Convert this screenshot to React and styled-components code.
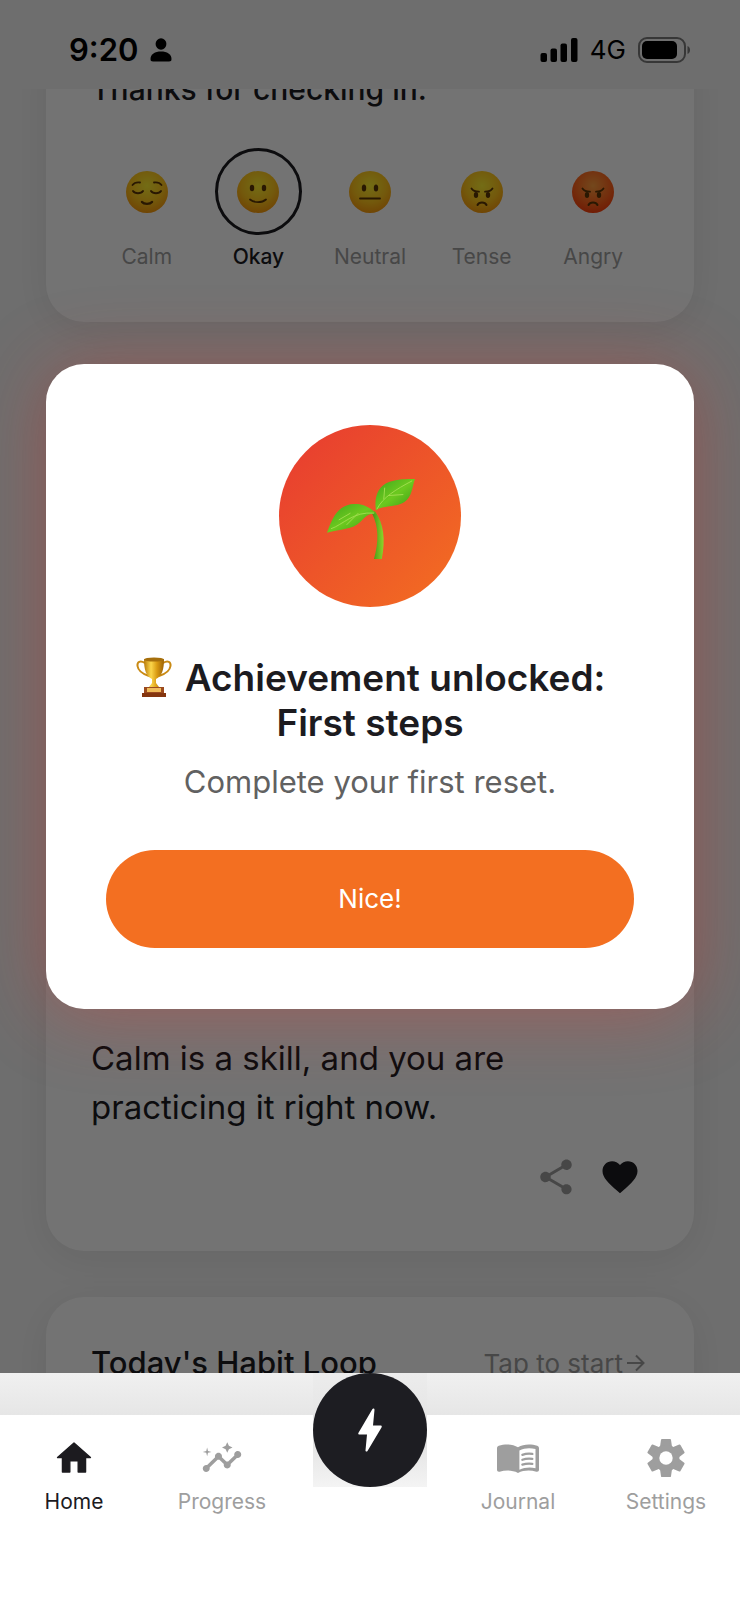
import React, { useState } from 'react';
import styled, { createGlobalStyle, ThemeProvider } from 'styled-components';
import { MdFavorite, MdInsights, MdShare } from 'react-icons/md';

const theme = {
  color: {
    ink: '#1c1b1f',
    muted: '#9e9e9e',
    body: '#616161',
    page: '#f4f4f4',
    surface: '#ffffff',
    dark: '#1d1d22',
    accent: '#f36f21',
    accentDeep: '#e73a31',
  },
  font: {
    small: '21px',
    medium: '26px',
    heading: '30px',
    body: '31px',
    quote: '33px',
    title: '37px',
  },
};

const GlobalStyle = createGlobalStyle`
  *, *::before, *::after {
    box-sizing: border-box;
  }
  body, h1, h2, p {
    margin: 0;
    padding: 0;
  }
  body {
    background-color: ${theme.color.surface};
    color: ${theme.color.ink};
    font-family: Inter, 'Liberation Sans', sans-serif;
  }
  button {
    border: 0;
    background: none;
    font-family: inherit;
    cursor: pointer;
  }
`;

const Screen = styled.div`
  display: flex;
  flex-direction: column;
  height: 100vh;
`;
const Stage = styled.div`
  position: relative;
  display: flex;
  flex: 1;
  flex-direction: column;
  min-height: 0;
  background-color: ${({ theme }) => theme.color.page};
`;
const StatusBar = styled.header`
  display: flex;
  align-items: center;
  justify-content: space-between;
  flex-shrink: 0;
  height: 89px;
  padding: 10px 50px 0 69px;
  color: #000000;
`;
const StatusGroup = styled.div`
  display: flex;
  align-items: center;
  gap: 12px;
`;
const StatusTime = styled.span`
  font-size: ${({ theme }) => theme.font.body};
  font-weight: 600;
`;
const StatusNetwork = styled.span`
  font-size: ${({ theme }) => theme.font.medium};
`;
const Feed = styled.main`
  flex: 1;
  min-height: 0;
  padding: 0 46px;
  overflow: hidden;
`;
const FeedScroll = styled.div`
  display: flex;
  flex-direction: column;
  gap: 46px;
  margin-top: -66px;
`;
const Card = styled.section`
  padding: 45px;
  border-radius: 38px;
  background-color: ${({ theme }) => theme.color.surface};
  box-shadow: 0 8px 40px rgba(0, 0, 0, .07);
`;
const MoodCard = styled(Card)`
  padding-bottom: 51px;
`;
const CardTitle = styled.h2`
  font-size: ${({ theme, $large }) => $large ? theme.font.body : theme.font.heading};
  font-weight: 500;
  line-height: 42px;
`;
const MoodList = styled.div`
  display: grid;
  grid-template-columns: repeat(5, 1fr);
  margin-top: 38px;
`;
const MoodButton = styled.button`
  display: flex;
  flex-direction: column;
  align-items: center;
  gap: 8px;
  padding: 0;
  color: ${({ theme, $selected }) => $selected ? theme.color.ink : theme.color.muted};
  font-size: ${({ theme }) => theme.font.small};
  font-weight: ${({ $selected }) => $selected ? 500 : 400};
  line-height: 28px;
`;
const MoodRing = styled.span`
  display: flex;
  align-items: center;
  justify-content: center;
  width: 87px;
  height: 87px;
  border: 3px solid ${({ theme, $selected }) => $selected ? theme.color.ink : 'transparent'};
  border-radius: 50%;
`;
const QuoteCard = styled(Card)`
  display: flex;
  flex-direction: column;
  justify-content: flex-end;
  min-height: 883px;
`;
const Quote = styled.p`
  max-width: 460px;
  font-size: ${({ theme }) => theme.font.quote};
  line-height: 49px;
`;
const QuoteActions = styled.div`
  display: flex;
  justify-content: flex-end;
  gap: 6px;
  margin-top: 16px;
`;
const IconButton = styled.button`
  display: flex;
  padding: 8px;
  color: ${({ theme, $active }) => $active ? theme.color.ink : theme.color.muted};
  font-size: 42px;
`;
const HabitHeader = styled.div`
  display: flex;
  align-items: center;
  justify-content: space-between;
`;
const HabitLink = styled.a`
  display: flex;
  align-items: center;
  gap: 4px;
  padding-right: 4px;
  color: ${({ theme }) => theme.color.muted};
  font-size: ${({ theme }) => theme.font.medium};
  text-decoration: none;
`;
const Overlay = styled.div`
  position: absolute;
  inset: 0;
  display: flex;
  align-items: center;
  justify-content: center;
  padding: 0 46px;
  background-color: rgba(0, 0, 0, .55);
  overflow: hidden;
`;
const Dialog = styled.div`
  display: flex;
  flex-direction: column;
  align-items: center;
  width: 100%;
  padding: 61px 60px;
  border-radius: 38px;
  background-color: ${({ theme }) => theme.color.surface};
  box-shadow: 0 4px 76px rgba(231, 58, 49, .36);
  text-align: center;
`;
const Badge = styled.div`
  display: flex;
  align-items: center;
  justify-content: center;
  width: 182px;
  height: 182px;
  padding: 6px 0 0 4px;
  border-radius: 50%;
  background-image: linear-gradient(135deg, ${({ theme }) => theme.color.accentDeep}, ${({ theme }) => theme.color.accent});
`;
const DialogTitle = styled.h1`
  margin-top: 48px;
  font-size: ${({ theme }) => theme.font.title};
  font-weight: 600;
  line-height: 45px;

  svg {
    margin-right: 12px;
    vertical-align: -6px;
  }
`;
const DialogText = styled.p`
  margin-top: 18px;
  color: ${({ theme }) => theme.color.body};
  font-size: ${({ theme }) => theme.font.body};
  line-height: 38px;
`;
const PrimaryButton = styled.button`
  width: 100%;
  margin-top: 49px;
  padding: 31px;
  border-radius: 49px;
  background-color: ${({ theme }) => theme.color.accent};
  color: ${({ theme }) => theme.color.surface};
  font-size: ${({ theme }) => theme.font.medium};
  line-height: 36px;
`;
const NavArea = styled.footer`
  position: relative;
  flex-shrink: 0;
  padding-top: 42px;
  background-image: linear-gradient(#f0f0f0, #e6e6e6 42px);
`;
const NavList = styled.nav`
  display: grid;
  grid-template-columns: repeat(5, 1fr);
  height: 185px;
  padding-top: 22px;
  background-color: ${({ theme }) => theme.color.surface};
`;
const NavItem = styled.a`
  display: flex;
  flex-direction: column;
  align-items: center;
  gap: 9px;
  color: ${({ theme, $active }) => $active ? theme.color.ink : theme.color.muted};
  font-size: ${({ theme }) => theme.font.small};
  line-height: 28px;
  text-decoration: none;

  svg {
    width: 42px;
    height: 42px;
  }
`;
const FabHolder = styled.div`
  position: absolute;
  top: 0;
  left: 50%;
  width: 114px;
  height: 114px;
  margin-left: -57px;
  background-image: linear-gradient(#ececec, #e2e2e2 60%, #f4f4f4);
`;
const Fab = styled.button`
  display: flex;
  align-items: center;
  justify-content: center;
  width: 100%;
  height: 100%;
  padding: 0;
  border-radius: 50%;
  background-color: ${({ theme }) => theme.color.dark};
  color: ${({ theme }) => theme.color.surface};
`;

const PersonIcon = () => (
  <svg width="22" height="24" viewBox="0 0 22 24" aria-hidden="true">
    <ellipse cx="11" cy="6" rx="5.4" ry="5.8" />
    <path d="M.5 21c0-5 4.5-7.500 10.500-7.500s10.500 2.500 10.500 7.500c0 1.800-.8 2.500-2.500 2.500H3C1.300 23.500.5 22.800.5 21z" />
  </svg>
);

const SignalIcon = () => (
  <svg width="38" height="24" viewBox="0 0 38 24" aria-hidden="true">
    <rect x="0.5" y="15" width="6.5" height="9" rx="2" />
    <rect x="10.500" y="10.500" width="6.500" height="13.500" rx="2" />
    <rect x="20.500" y="5.500" width="6.500" height="18.500" rx="2" />
    <rect x="31" y="0" width="6.500" height="24" rx="2" />
  </svg>
);

const BatteryIcon = () => (
  <svg width="52" height="26" viewBox="0 0 52 26" aria-hidden="true">
    <rect x="1" y="1" width="46" height="24" rx="8" fill="none" stroke="#7a7a7a" strokeWidth="2" />
    <rect x="4" y="4" width="35" height="18" rx="5" />
    <path d="M49.500 9c2 .8 2.500 2.500 2.500 4s-.5 3.200-2.500 4z" fill="#7a7a7a" />
  </svg>
);

const HomeIcon = () => (
  <svg viewBox="0 0 24 24" fill="currentColor" stroke="currentColor" strokeWidth=".8" strokeLinejoin="round" aria-hidden="true">
    <path d="M9.600 20v-6.400h4.800V20h4.200v-8.300h2.800L12 3.400l-9.400 8.300h2.800V20z" />
  </svg>
);

const JournalIcon = () => (
  <svg viewBox="0 0 24 24" fill="none" stroke="currentColor" strokeLinecap="round" aria-hidden="true">
    <path d="M0 6.500c0-.8.300-1.200 1-1.500C4.500 3.900 9 3.900 12 5.900c3-2 7.500-2 11-.9.700.3 1 .7 1 1.500v12.200c0 .8-.6 1.300-1.500 1.100-3.500-.9-7.300-.9-10.500.8-3.200-1.700-7-1.700-10.500-.8-.9.200-1.500-.3-1.500-1.100z" fill="currentColor" stroke="none" />
    <path d="M12.800 7.700c2.800-1.500 6-1.600 9.200-.9v11c-3.200-.6-6.400-.4-9.200.9z" fill="#ffffff" stroke="none" />
    <path d="M14.500 10.200c2-.7 3.700-.8 5.700-.5M14.500 13c2-.7 3.700-.8 5.700-.5M14.500 15.800c2-.7 3.700-.8 5.700-.5" strokeWidth="1.300" />
  </svg>
);

const SettingsIcon = () => (
  <svg viewBox="0 0 42 42" fill="currentColor" stroke="currentColor" strokeLinejoin="round" aria-hidden="true">
    {[0, 60, 120].map(angle => (
      <path
        key={angle}
        d="M17 3h8l1 7v22l-1 7h-8l-1-7V10z"
        strokeWidth="2"
        transform={`rotate(${angle} 21 21)`}
      />
    ))}
    <circle cx="21" cy="21" r="13" />
    <circle cx="21" cy="21" r="6.700" fill="#ffffff" stroke="none" />
  </svg>
);

const BoltIcon = () => (
  <svg width="24" height="44" viewBox="0 0 24 44" fill="currentColor" aria-hidden="true">
    <path d="M14.300 1.200.5 24.800c-.6 1-.1 1.800 1 1.800H9L7.500 42.300c-.1 1.400 1.300 1.800 2 .6l14-23.500c.6-1 .1-1.800-1-1.800H15L16.500 1.800C16.600.3 15-.1 14.300 1.200z" />
  </svg>
);

const ArrowIcon = () => (
  <svg width="18" height="18" viewBox="0 0 18 18" fill="none" stroke="currentColor" strokeWidth="2" aria-hidden="true">
    <path d="M0 9h16.500M9 1.500 16.500 9 9 16.500" />
  </svg>
);

const faces = {
  Calm: (
    <>
      <path d="M6.500 14c1.500-2 4-3 7.500-2.500M28 11.500c3.500-.5 6 .5 7.500 2.500" />
      <path d="M7 20c2 3 8 3 10 0M25 20c2 3 8 3 10 0" strokeWidth="2" />
      <path d="M16 31c2 2.500 8 2.500 10 0" strokeWidth="2.400" />
    </>
  ),
  Okay: (
    <>
      <ellipse cx="15" cy="17" rx="2.200" ry="3.300" fill="#5c3605" stroke="none" />
      <ellipse cx="27" cy="17" rx="2.200" ry="3.300" fill="#5c3605" stroke="none" />
      <path d="M13 28.500c4 3.500 12 3.500 16 0" />
    </>
  ),
  Neutral: (
    <>
      <ellipse cx="15" cy="17" rx="2.200" ry="3.500" fill="#5c3605" stroke="none" />
      <ellipse cx="27" cy="17" rx="2.200" ry="3.500" fill="#5c3605" stroke="none" />
      <path d="M11 27.500h20" />
    </>
  ),
  Tense: (
    <>
      <path d="M10.500 17.500c1.500 2.500 4 3.200 7.500 3.200M31.500 17.500c-1.500 2.500-4 3.200-7.500 3.200" />
      <ellipse cx="15" cy="24" rx="2.200" ry="3" fill="#5c3605" stroke="none" />
      <ellipse cx="27" cy="24" rx="2.200" ry="3" fill="#5c3605" stroke="none" />
      <path d="M16.500 34c1.500-3.500 7.500-3.500 9 0" strokeWidth="2" />
    </>
  ),
};
faces.Angry = faces.Tense;

const MoodFace = ({ name }) => {
  const isAngry = name === 'Angry';

  return (
    <svg width="42" height="42" viewBox="0 0 42 42" aria-hidden="true">
      <defs>
        <radialGradient id={`mood-${name}`} cx="50%" cy="35%" r="65%">
          <stop offset="0" stopColor={isAngry ? '#ffa040' : '#fff030'} />
          <stop offset=".6" stopColor={isAngry ? '#ff6a20' : '#ffc61c'} />
          <stop offset="1" stopColor={isAngry ? '#fa400c' : '#f89a0c'} />
        </radialGradient>
      </defs>
      <circle cx="21" cy="21" r="21" fill={`url(#mood-${name})`} />
      <g fill="none" stroke="#5c3605" strokeWidth="1.800" strokeLinecap="round">
        {faces[name]}
      </g>
    </svg>
  );
};

const SproutIcon = () => (
  <svg width="90" height="84" viewBox="0 0 92 84" aria-hidden="true">
    <defs>
      <linearGradient id="leaf" x1="0" y1="0" x2="1" y2="1">
        <stop offset="0" stopColor="#3fa51c" />
        <stop offset=".5" stopColor="#6cc91f" />
        <stop offset="1" stopColor="#379a17" />
      </linearGradient>
      <linearGradient id="stem" x1="0" y1="0" x2="1" y2="0">
        <stop offset="0" stopColor="#3d9316" />
        <stop offset="1" stopColor="#8fd52b" />
      </linearGradient>
    </defs>
    <path d="M49 34c9 12 11 29 7 49h-8c5-18 5-33-2-47z" fill="url(#stem)" />
    <path d="M0 56C5 42 10 30 24 27c12-2 20 3 26 9-8 0-11 4-16 9-8 8-20 7-34 11z" fill="url(#leaf)" />
    <path d="M50 33c-2-13 2-25 14-29 8-3 17-3 26-3-3 7-2 14-8 21-8 9-23 5-32 11z" fill="url(#leaf)" />
    <path d="M4 52c12-4 23-18 44-16M12 43l12-7M20 48l12-12M51 32C57 20 70 12 87 3M58 22l1-12M63 18l15-1" fill="none" stroke="#a0dc4e" strokeWidth="1" />
  </svg>
);

const TrophyIcon = () => (
  <svg width="38" height="40" viewBox="0 0 36 40" aria-hidden="true">
    <defs>
      <linearGradient id="gold" x1="0" y1="0" x2="1" y2="0">
        <stop offset="0" stopColor="#b87909" />
        <stop offset=".35" stopColor="#fbd64b" />
        <stop offset=".65" stopColor="#d99a12" />
        <stop offset="1" stopColor="#9c6206" />
      </linearGradient>
    </defs>
    <path d="M9 6C4 3 1 5 1.500 9c.7 5 5 8 11.500 10M27 6c5-3 8-1 7.500 3-.7 5-5 8-11.500 10" fill="none" stroke="#c98a14" strokeWidth="2" />
    <path d="M8 2c0 11 2 17 8 20v4l-3 4h10l-3-4v-4c6-3 8-9 8-20z" fill="url(#gold)" />
    <ellipse cx="18" cy="2.500" rx="10" ry="2" fill="#a66f0c" />
    <path d="M8 30h20v6H8z" fill="#9b4a1e" />
    <path d="M11 31h14v4H11z" fill="#f0bc5a" />
    <path d="M6 36h24v4H6z" fill="#84350f" />
  </svg>
);

const moods = ['Calm', 'Okay', 'Neutral', 'Tense', 'Angry'];

const Mood = ({ name, selected, onSelect }) => (
  <MoodButton type="button" $selected={selected} aria-pressed={selected} onClick={() => onSelect(name)}>
    <MoodRing $selected={selected}>
      <MoodFace name={name} />
    </MoodRing>
    {name}
  </MoodButton>
);

const App = () => {
  const [mood, setMood] = useState('Okay');
  const [isOpen, setIsOpen] = useState(true);

  return (
    <ThemeProvider theme={theme}>
      <GlobalStyle />
      <Screen>
        <Stage>
          <StatusBar>
            <StatusGroup>
              <StatusTime>9:20</StatusTime>
              <PersonIcon />
            </StatusGroup>
            <StatusGroup>
              <SignalIcon />
              <StatusNetwork>4G</StatusNetwork>
              <BatteryIcon />
            </StatusGroup>
          </StatusBar>
          <Feed>
            <FeedScroll>
              <MoodCard>
                <CardTitle>Thanks for checking in.</CardTitle>
                <MoodList>
                  {moods.map(name => (
                    <Mood key={name} name={name} selected={mood === name} onSelect={setMood} />
                  ))}
                </MoodList>
              </MoodCard>
              <QuoteCard>
                <Quote>Calm is a skill, and you are practicing it right now.</Quote>
                <QuoteActions>
                  <IconButton type="button" aria-label="Share"><MdShare /></IconButton>
                  <IconButton type="button" aria-label="Favorite" $active><MdFavorite /></IconButton>
                </QuoteActions>
              </QuoteCard>
              <Card>
                <HabitHeader>
                  <CardTitle $large>Today's Habit Loop</CardTitle>
                  <HabitLink href="#habit">Tap to start<ArrowIcon /></HabitLink>
                </HabitHeader>
              </Card>
            </FeedScroll>
          </Feed>
          {isOpen && (
            <Overlay>
              <Dialog role="dialog" aria-modal="true" aria-labelledby="achievement">
                <Badge><SproutIcon /></Badge>
                <DialogTitle id="achievement">
                  <TrophyIcon />
                  Achievement unlocked: First steps
                </DialogTitle>
                <DialogText>Complete your first reset.</DialogText>
                <PrimaryButton type="button" onClick={() => setIsOpen(false)}>Nice!</PrimaryButton>
              </Dialog>
            </Overlay>
          )}
        </Stage>
        <NavArea>
          <NavList>
            <NavItem href="#home" $active><HomeIcon />Home</NavItem>
            <NavItem href="#progress"><MdInsights />Progress</NavItem>
            <span />
            <NavItem href="#journal"><JournalIcon />Journal</NavItem>
            <NavItem href="#settings"><SettingsIcon />Settings</NavItem>
          </NavList>
          <FabHolder>
            <Fab type="button" aria-label="Start reset"><BoltIcon /></Fab>
          </FabHolder>
        </NavArea>
      </Screen>
    </ThemeProvider>
  );
};

export default App;
